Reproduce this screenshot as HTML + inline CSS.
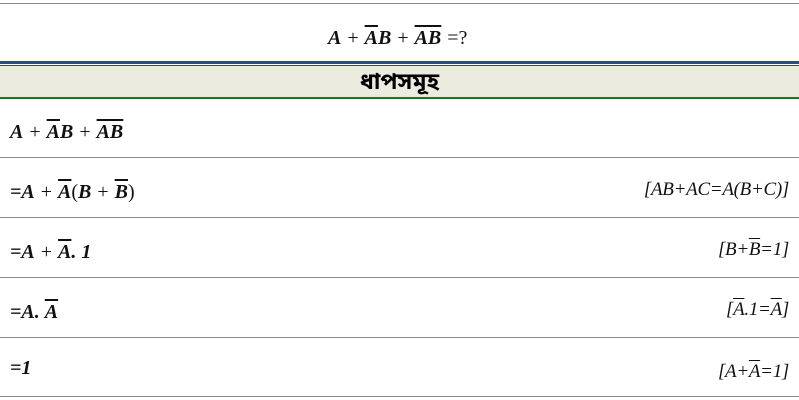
<!DOCTYPE html>
<html><head><meta charset="utf-8"><style>
body{margin:0;width:799px;height:400px;background:#fff;position:relative;overflow:hidden;font-family:"Liberation Serif","DejaVu Serif",serif;}
.l{position:absolute;left:0;width:799px;height:1px;background:#8a8a8a}
.t{position:absolute;font-size:20px;font-weight:bold;font-style:italic;color:#111;white-space:nowrap}
.r{position:absolute;right:10px;font-size:19px;font-style:italic;color:#111;white-space:nowrap;letter-spacing:-0.3px}
.o{text-decoration:overline}
.n{font-style:normal;font-weight:normal}
.p{font-style:normal;font-weight:normal;padding:0 6px}
</style></head><body>
<div class="l" style="top:3px"></div>
<div class="t" style="left:328px;top:27px">A<span class="p">+</span><span class="o">A</span>B<span class="p">+</span><span class="o">AB</span><span class="n" style="padding-left:6px">=?</span></div>
<div style="position:absolute;left:0;top:61px;width:799px;height:3px;background:#2c4e80"></div>
<div style="position:absolute;left:0;top:65px;width:799px;height:1px;background:#2c4e80"></div>
<div style="position:absolute;left:0;top:66px;width:799px;height:32px;background:#ecebe0"></div>
<div style="position:absolute;left:0;top:97px;width:799px;height:2px;background:#1a7a1a"></div>
<div style="position:absolute;left:0;top:66px;width:799px;height:32px;line-height:30px;text-align:center;font-size:23px;font-weight:bold;font-family:'Liberation Sans','Noto Sans Bengali','Lohit Bengali',sans-serif">ধাপসমূহ</div>
<div class="t" style="left:10px;top:121px">A<span class="p">+</span><span class="o">A</span>B<span class="p">+</span><span class="o">AB</span></div>
<div class="l" style="top:157px"></div>
<div class="t" style="left:10px;top:181px">=A<span class="p">+</span><span class="o">A</span><span class="n">(</span>B<span class="p">+</span><span class="o">B</span><span class="n">)</span></div>
<div class="r" style="top:179px">[AB+AC=A(B+C)]</div>
<div class="l" style="top:217px"></div>
<div class="t" style="left:10px;top:241px">=A<span class="p">+</span><span class="o">A</span>.&nbsp;1</div>
<div class="r" style="top:239px">[B+<span class="o">B</span>=1]</div>
<div class="l" style="top:277px"></div>
<div class="t" style="left:10px;top:301px">=A.&nbsp;<span class="o">A</span></div>
<div class="r" style="top:299px">[<span class="o">A</span>.1=<span class="o">A</span>]</div>
<div class="l" style="top:337px"></div>
<div class="t" style="left:10px;top:357px">=1</div>
<div class="r" style="top:361px">[A+<span class="o">A</span>=1]</div>
<div class="l" style="top:396px"></div>
</body></html>
